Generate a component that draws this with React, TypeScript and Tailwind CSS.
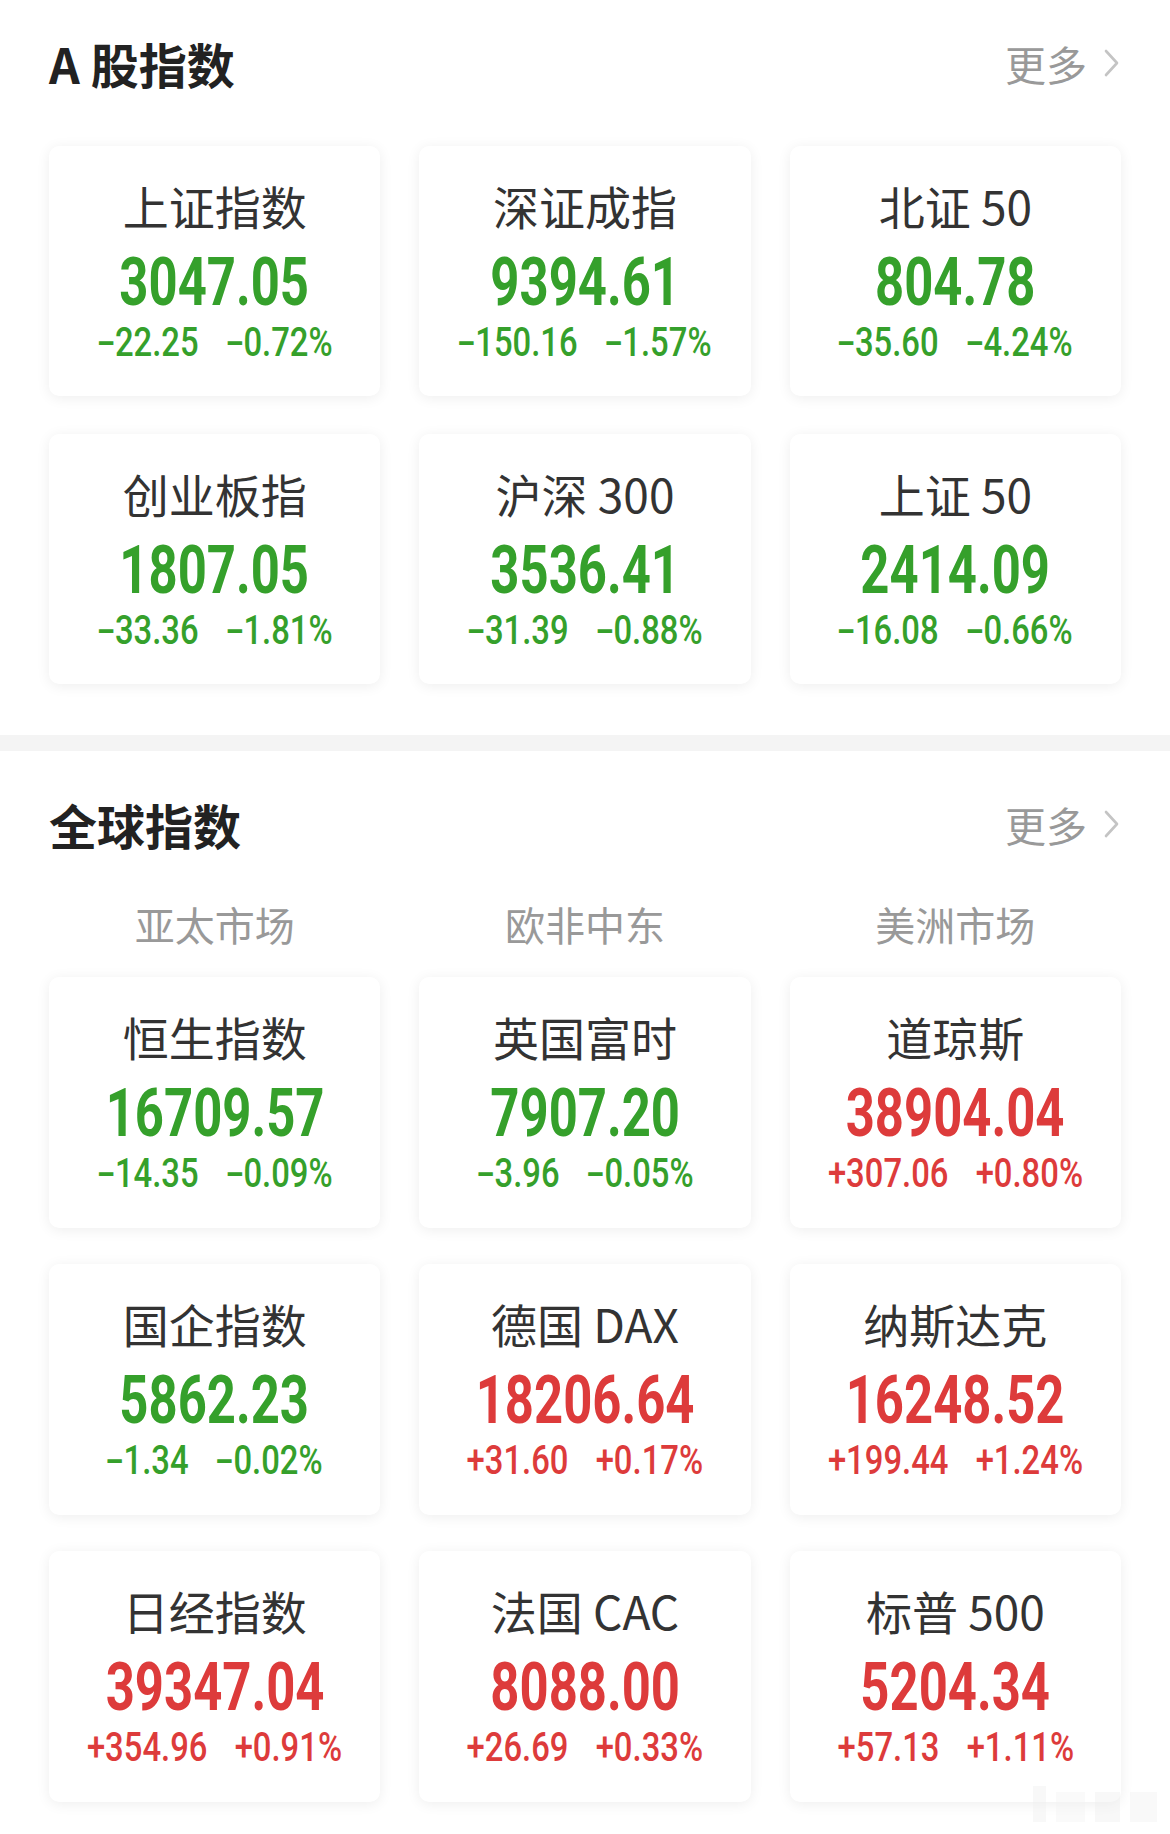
import React from "react";

type Item = { name: string; value: string; change: string; pct: string; up: boolean };

const aShares: Item[] = [
  { name: "上证指数", value: "3047.05", change: "-22.25", pct: "-0.72%", up: false },
  { name: "深证成指", value: "9394.61", change: "-150.16", pct: "-1.57%", up: false },
  { name: "北证 50", value: "804.78", change: "-35.60", pct: "-4.24%", up: false },
  { name: "创业板指", value: "1807.05", change: "-33.36", pct: "-1.81%", up: false },
  { name: "沪深 300", value: "3536.41", change: "-31.39", pct: "-0.88%", up: false },
  { name: "上证 50", value: "2414.09", change: "-16.08", pct: "-0.66%", up: false },
];

const globalIdx: Item[] = [
  { name: "恒生指数", value: "16709.57", change: "-14.35", pct: "-0.09%", up: false },
  { name: "英国富时", value: "7907.20", change: "-3.96", pct: "-0.05%", up: false },
  { name: "道琼斯", value: "38904.04", change: "+307.06", pct: "+0.80%", up: true },
  { name: "国企指数", value: "5862.23", change: "-1.34", pct: "-0.02%", up: false },
  { name: "德国 DAX", value: "18206.64", change: "+31.60", pct: "+0.17%", up: true },
  { name: "纳斯达克", value: "16248.52", change: "+199.44", pct: "+1.24%", up: true },
  { name: "日经指数", value: "39347.04", change: "+354.96", pct: "+0.91%", up: true },
  { name: "法国 CAC", value: "8088.00", change: "+26.69", pct: "+0.33%", up: true },
  { name: "标普 500", value: "5204.34", change: "+57.13", pct: "+1.11%", up: true },
];

function Header({ title }: { title: string }) {
  return (
    <div className="flex h-[56px] items-center justify-between">
      <div className="text-[48px] font-bold leading-none text-[#222222]">{title}</div>
      <div className="flex items-center gap-[16px] pr-[1px]">
        <span className="text-[41px] leading-none text-[#999999]">更多</span>
        <svg width="17" height="30" viewBox="0 0 17 30" fill="none">
          <polyline points="3,3 14,15 3,27" stroke="#c4c4c4" strokeWidth="2.6" strokeLinecap="round" strokeLinejoin="round" />
        </svg>
      </div>
    </div>
  );
}

function Signed({ text }: { text: string }) {
  if (text.startsWith("-")) {
    return (
      <span>
        <span className="mx-[4px] inline-block scale-x-[1.7]">-</span>
        {text.slice(1)}
      </span>
    );
  }
  return <span>{text}</span>;
}

function Card({ item, h }: { item: Item; h: string }) {
  const color = item.up ? "text-[#dd3b3b]" : "text-[#35a02b]";
  return (
    <div className={`flex flex-col items-center rounded-[10px] bg-white pt-[34px] shadow-[0_2px_14px_rgba(0,0,0,0.07)] ${h}`}>
      <div className="h-[50px] whitespace-pre text-[46px] leading-[50px] text-[#333333]">{item.name}</div>
      <div className={`mt-[18px] h-[70px] font-['Roboto'] text-[66px] font-bold leading-[70px] ${color}`}>
        <span className="inline-block scale-x-[0.77]">{item.value}</span>
      </div>
      <div className={`mt-[4px] h-[40px] font-['Roboto'] text-[41px] font-medium leading-[40px] ${color}`}>
        <span className="inline-flex scale-x-[0.8] gap-[34px] whitespace-nowrap">
          <Signed text={item.change} />
          <Signed text={item.pct} />
        </span>
      </div>
    </div>
  );
}

export default function App() {
  return (
    <div className="relative w-[1170px] bg-white font-['Noto_Sans_CJK_SC','Noto_Sans',sans-serif]">
      <section className="px-[49px] pt-[35px] pb-[51px]">
        <Header title="A 股指数" />
        <div className="mt-[55px] grid grid-cols-3 gap-x-[39px] gap-y-[38px]">
          {aShares.map((it) => (
            <Card key={it.name} item={it} h="h-[250px]" />
          ))}
        </div>
      </section>
      <div className="h-[16px] bg-[#f4f4f4]" />
      <section className="px-[49px] pt-[45px] pb-[32px]">
        <Header title="全球指数" />
        <div className="mt-[47px] grid h-[50px] grid-cols-3 gap-x-[39px] text-center text-[40px] leading-[50px] text-[#999999]">
          <div>亚太市场</div>
          <div>欧非中东</div>
          <div>美洲市场</div>
        </div>
        <div className="mt-[28px] grid grid-cols-3 gap-x-[39px] gap-y-[36px]">
          {globalIdx.map((it) => (
            <Card key={it.name} item={it} h="h-[251px]" />
          ))}
        </div>
      </section>
      <div className="pointer-events-none absolute right-[13px] bottom-[12px] flex h-[40px] w-[124px] items-end gap-[10px] opacity-40">
        <div className="h-[36px] w-[14px] bg-[#f0f0f0]" />
        <div className="h-[30px] w-[30px] bg-[#f3f3f3]" />
        <div className="h-[30px] w-[26px] bg-[#eeeeee]" />
        <div className="h-[30px] w-[28px] bg-[#f1f1f1]" />
      </div>
    </div>
  );
}
